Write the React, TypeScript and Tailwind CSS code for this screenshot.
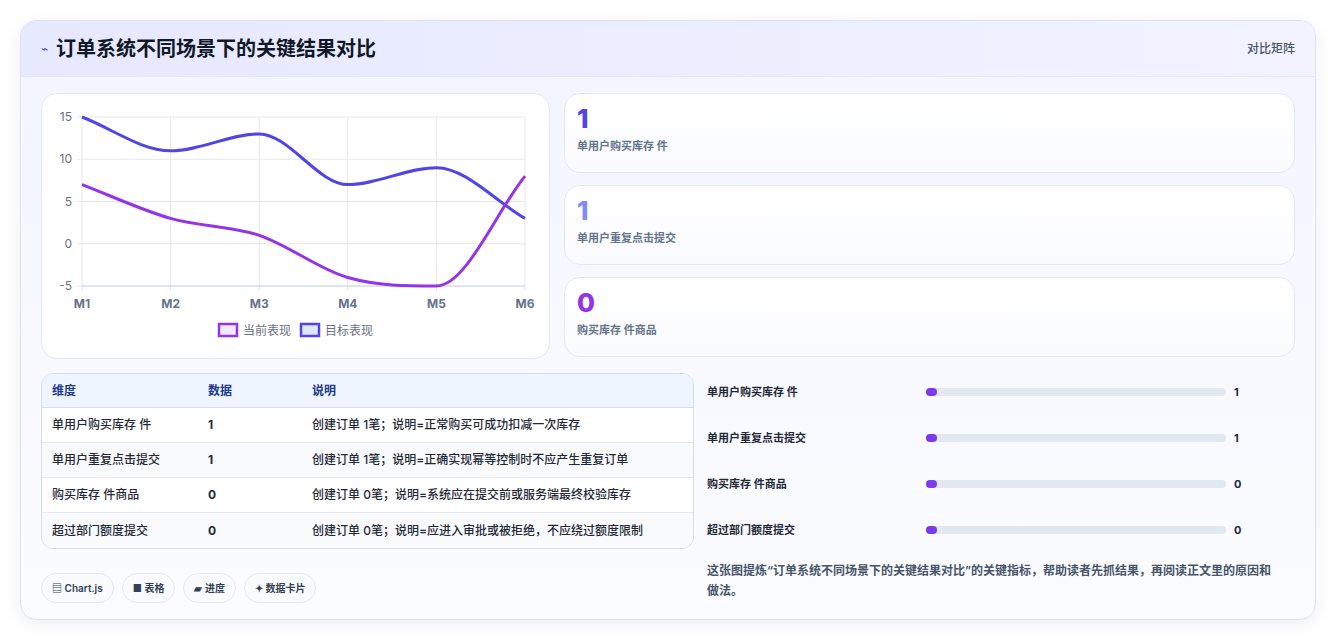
import React from "react";

const font = { fontFamily: '"Inter", "Noto Sans CJK SC", sans-serif' };

const cur = [7, 3, 1, -4, -5, 8];
const tgt = [15, 11, 13, 7, 9, 3];
const X0 = 40, X1 = 483, Y0 = 23, Y1 = 192;
const px = (i: number) => X0 + ((X1 - X0) / 5) * i;
const py = (v: number) => Y0 + ((15 - v) / 20) * (Y1 - Y0);

// monotone cubic interpolation, no overshoot
function smooth(vals: number[]) {
  const pts = vals.map((v, i) => [px(i), py(v)]);
  const n = pts.length;
  const h = pts[1][0] - pts[0][0];
  const dk = pts.slice(0, -1).map((p, i) => (pts[i + 1][1] - p[1]) / h);
  const m = pts.map((_, i) => {
    if (i === 0) return dk[0];
    if (i === n - 1) return dk[n - 2];
    if (dk[i - 1] * dk[i] <= 0) return 0;
    return (dk[i - 1] + dk[i]) / 2;
  });
  let d = `M${pts[0][0]},${pts[0][1]}`;
  for (let i = 0; i < n - 1; i++) {
    const p1 = pts[i], p2 = pts[i + 1];
    d += ` C${p1[0] + h / 3},${p1[1] + (m[i] * h) / 3} ${p2[0] - h / 3},${p2[1] - (m[i + 1] * h) / 3} ${p2[0]},${p2[1]}`;
  }
  return d;
}

const rows = [
  ["单用户购买库存 件", "1", "创建订单 1笔；说明=正常购买可成功扣减一次库存"],
  ["单用户重复点击提交", "1", "创建订单 1笔；说明=正确实现幂等控制时不应产生重复订单"],
  ["购买库存 件商品", "0", "创建订单 0笔；说明=系统应在提交前或服务端最终校验库存"],
  ["超过部门额度提交", "0", "创建订单 0笔；说明=应进入审批或被拒绝，不应绕过额度限制"],
];

const stats = [
  { v: "1", l: "单用户购买库存 件", c: "text-[#4f46e5]" },
  { v: "1", l: "单用户重复点击提交", c: "text-[#818cf8]" },
  { v: "0", l: "购买库存 件商品", c: "text-[#9333ea]" },
];

function Chart() {
  return (
    <div className="h-[266px] bg-white border border-[#e2e8f0] rounded-2xl">
      <svg width="509" height="266" className="block">
        {[15, 10, 5, 0, -5].map((v) => (
          <g key={v}>
            <line x1={X0 - 5} x2={X1} y1={py(v)} y2={py(v)} stroke="#e5e7eb" />
            <text x={X0 - 10} y={py(v) + 4} textAnchor="end" fontSize="12" fill="#6b7280" style={font}>{v}</text>
          </g>
        ))}
        {[0, 1, 2, 3, 4, 5].map((i) => (
          <g key={i}>
            <line x1={px(i)} x2={px(i)} y1={Y0} y2={Y1 + 5} stroke="#e5e7eb" />
            <text x={px(i)} y={Y1 + 22} textAnchor="middle" fontSize="12" fontWeight="700" fill="#64748b" style={font}>M{i + 1}</text>
          </g>
        ))}
        <line x1={X0} x2={X1} y1={Y1} y2={Y1} stroke="#cbd5e1" />
        <path d={smooth(tgt)} fill="none" stroke="#4f46e5" strokeWidth="3" />
        <path d={smooth(cur)} fill="none" stroke="#9333ea" strokeWidth="3" />
        <rect x="177" y="230" width="18" height="12" fill="#f3e8ff" stroke="#9333ea" strokeWidth="2.5" />
        <text x="201" y="241" fontSize="12" fill="#6b7280" style={font}>当前表现</text>
        <rect x="259" y="230" width="18" height="12" fill="#e0e7ff" stroke="#4f46e5" strokeWidth="2.5" />
        <text x="283" y="241" fontSize="12" fill="#6b7280" style={font}>目标表现</text>
      </svg>
    </div>
  );
}

export default function App() {
  return (
    <div className="min-h-screen bg-white px-5 pt-5" style={font}>
      <div className="rounded-2xl border border-[#dbe2f0] bg-gradient-to-b from-[#f3f5ff] to-[#fbfcff] shadow-[0_4px_16px_rgba(30,41,100,0.08)] overflow-hidden">
        <div className="h-14 flex items-center justify-between px-5 bg-gradient-to-r from-[#e6e9ff] to-[#f2f3ff] border-b border-[#e4e8f6]">
          <div className="flex items-center gap-2">
            <span className="text-[#4f46e5] text-xs">⌁</span>
            <h1 className="text-[20px] font-bold text-[#111827]">订单系统不同场景下的关键结果对比</h1>
          </div>
          <span className="text-xs text-[#475569] font-medium">对比矩阵</span>
        </div>
        <div className="px-5 pt-[16px] pb-[16px]">
          <div className="grid grid-cols-[509px_1fr] gap-[14px]">
            <Chart />
            <div className="flex flex-col gap-3">
              {stats.map((s, i) => (
                <div key={i} className="h-[80px] rounded-2xl border border-[#e2e8f4] bg-gradient-to-b from-white to-[#fafbff] px-3 pt-2">
                  <div className={`text-[26px] font-extrabold leading-[34px] ${s.c}`}>{s.v}</div>
                  <div className="text-[11px] font-semibold text-[#64748b] mt-0.5">{s.l}</div>
                </div>
              ))}
            </div>
          </div>
          <div className="grid grid-cols-[653px_1fr] gap-[13px] mt-[14px]">
            <div>
              <div className="rounded-xl border border-[#d5dde8] overflow-hidden bg-white text-[12px]">
                <div className="grid grid-cols-[156px_104px_1fr] h-[34px] items-center px-[10px] bg-[#eef5ff] border-b border-[#d5dde8] font-semibold text-[#1e3a8a]">
                  <span>维度</span><span>数据</span><span>说明</span>
                </div>
                {rows.map((r, i) => (
                  <div key={i} className={`grid grid-cols-[156px_104px_1fr] h-[35px] items-center px-[10px] text-[#1f2937] font-medium ${i < 3 ? "border-b border-[#e5e9f0]" : ""} ${i % 2 ? "bg-[#f8fafc]" : "bg-white"}`}>
                    <span>{r[0]}</span><span className="font-bold">{r[1]}</span><span>{r[2]}</span>
                  </div>
                ))}
              </div>
              <div className="flex gap-2 mt-6">
                {["▤ Chart.js", "■ 表格", "▰ 进度", "✦ 数据卡片"].map((p) => (
                  <span key={p} className="h-[30px] px-2.5 flex items-center rounded-full border border-[#e2e8f0] bg-[#f8fafc] text-[10px] font-semibold text-[#334155]">{p}</span>
                ))}
              </div>
            </div>
            <div>
              <div className="flex flex-col -mt-1">
                {rows.map((r, i) => (
                  <div key={i} className="h-[46px] grid grid-cols-[219px_300px_1fr] items-center text-[11px] font-semibold text-[#1f2937]">
                    <span>{r[0]}</span>
                    <div className="h-2 rounded-full bg-[#e2e8f0]">
                      <div className="h-2 w-[11px] rounded-full bg-[#7c3aed]" />
                    </div>
                    <span className="pl-2 font-bold">{r[1]}</span>
                  </div>
                ))}
              </div>
              <p className="mt-2 text-xs leading-[20px] text-[#475569] font-semibold pr-5">这张图提炼“订单系统不同场景下的关键结果对比”的关键指标，帮助读者先抓结果，再阅读正文里的原因和做法。</p>
            </div>
          </div>
        </div>
      </div>
    </div>
  );
}
